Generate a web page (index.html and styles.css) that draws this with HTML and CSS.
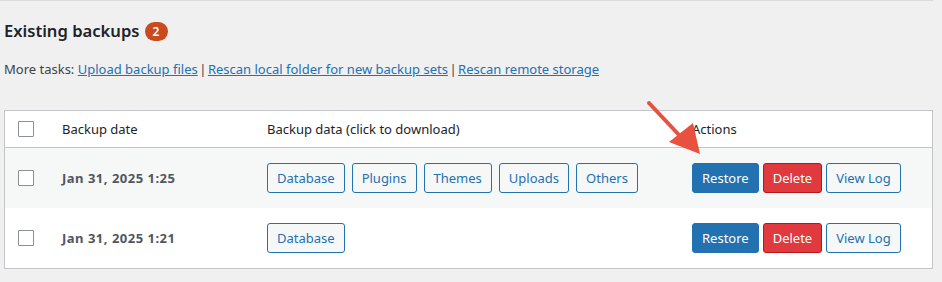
FILE: index.html
```html
<!DOCTYPE html>
<html>
	<head>
		<meta charset="UTF-8">
		<title>Existing backups</title>
		<link rel="stylesheet" href="styles.css">
	</head>
	<body>
		<div id="wrap">
			<h2 class="title">Existing backups <span class="count">2</span></h2>
			<p class="tasks">More tasks: <a href="javascript:;">Upload backup files</a><span class="sep">|</span><a href="javascript:;">Rescan local folder for new backup sets</a><span class="sep">|</span><a href="javascript:;">Rescan remote storage</a></p>

			<div id="backups">
				<div class="row head">
					<span class="cell check"><i class="box"></i></span>
					<span class="cell">Backup date</span>
					<span class="cell">Backup data (click to download)</span>
					<span class="cell">Actions</span>
				</div>
				<div class="row alt">
					<span class="cell check"><i class="box"></i></span>
					<span class="cell date">Jan 31, 2025 1:25</span>
					<span class="cell files">
						<a class="btn" href="javascript:;">Database</a>
						<a class="btn" href="javascript:;">Plugins</a>
						<a class="btn" href="javascript:;">Themes</a>
						<a class="btn" href="javascript:;">Uploads</a>
						<a class="btn" href="javascript:;">Others</a>
					</span>
					<span class="cell actions">
						<a class="btn primary" href="javascript:;">Restore</a>
						<a class="btn danger" href="javascript:;">Delete</a>
						<a class="btn" href="javascript:;">View Log</a>
					</span>
				</div>
				<div class="row">
					<span class="cell check"><i class="box"></i></span>
					<span class="cell date">Jan 31, 2025 1:21</span>
					<span class="cell files">
						<a class="btn" href="javascript:;">Database</a>
					</span>
					<span class="cell actions">
						<a class="btn primary" href="javascript:;">Restore</a>
						<a class="btn danger" href="javascript:;">Delete</a>
						<a class="btn" href="javascript:;">View Log</a>
					</span>
				</div>
				<!-- arrow pointing at the first Restore button -->
				<svg class="arrow" width="60" height="60" viewBox="0 0 60 60">
					<line x1="3" y1="3" x2="34" y2="36" stroke="#e8513f" stroke-width="4" stroke-linecap="round"/>
					<polygon points="23,42 47,23 54,54" fill="#e8513f"/>
				</svg>
			</div>
		</div>
	</body>
</html>
```

FILE: styles.css
```css
html,body{
	margin: 0;
	background: #f0f0f1;
}
body{
	font-family: "Noto Sans", "Open Sans", sans-serif;
	font-size: 13px;
	color: #1d2327;
}
a{
	color: #2271b1;
}
#wrap{
	width: 929px;
	padding: 0 0 0 4px;
	border-top: 1px solid #dcdcde;
}
.title{
	margin: 0;
	padding-top: 18px;
	height: 24px;
	font-size: 16.6px;
	line-height: 24px;
	font-weight: 600;
	display: flex;
	align-items: center;
	gap: 5px;
}
.count{
	display: inline-block;
	min-width: 23px;
	height: 19px;
	border-radius: 10px;
	background: #ca4a1f;
	color: #fff;
	font-size: 12px;
	line-height: 19px;
	text-align: center;
	font-weight: 600;
}
.tasks{
	margin: 16px 0 0;
	line-height: 20px;
	color: #3c434a;
}
.tasks .sep{
	margin: 0 1.5px;
}
#backups{
	margin-top: 31px;
	background: #fff;
	border: 1px solid #c3c4c7;
	position: relative;
}
.row{
	display: grid;
	grid-template-columns: 57px 205px 425px 1fr;
	align-items: center;
	height: 60px;
}
.row.head{
	height: 36px;
	border-bottom: 1px solid #c3c4c7;
	color: #1d2327;
}
.row.alt{
	background: #f6f7f7;
}
.check{
	padding-left: 13px;
	display: flex;
}
.box{
	width: 14px;
	height: 14px;
	border: 1px solid #8c8f94;
	border-radius: 1px;
	background: #fff;
}
.date{
	font-weight: 700;
	color: #50575e;
	letter-spacing: 0.5px;
}
.files,.actions{
	display: flex;
	gap: 7px;
}
.actions{
	gap: 4px;
}
.btn{
	display: inline-block;
	box-sizing: border-box;
	height: 30px;
	line-height: 28px;
	padding: 0 9px;
	border: 1px solid #2271b1;
	border-radius: 3px;
	background: #f6f7f7;
	color: #2271b1;
	text-decoration: none;
}
.btn.primary{
	background: #2271b1;
	color: #fff;
}
.btn.danger{
	background: #e03a3e;
	border-color: #b8161b;
	color: #fff;
}
.arrow{
	position: absolute;
	left: 641px;
	top: -11px;
}
```
